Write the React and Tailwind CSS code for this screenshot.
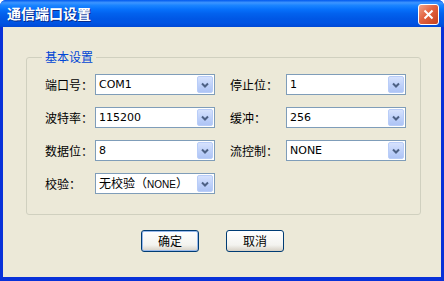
import React from "react";

const cn = "font-['Noto_Sans_CJK_SC',sans-serif]";

// XP风格下拉框
const Combo = ({ value }) => (
  <div className="w-[120px] h-[21px] border border-[#7f9db9] bg-white flex items-center">
    <div className="flex-1 min-w-0 pl-[3px] text-[11px] text-black leading-[16px] font-['DejaVu_Sans','Noto_Sans_CJK_SC',sans-serif] whitespace-nowrap">
      {value}
    </div>
    <div className="shrink-0 w-[16px] h-[17px] mr-[1px] rounded-[2px] border border-[#b9cdf8] bg-[linear-gradient(to_bottom,#d6e2fd,#bccff9_60%,#aec4f5)] flex items-center justify-center">
      <svg width="8" height="6" viewBox="0 0 8 6">
        <path d="M1 1.5 L4 4.5 L7 1.5" stroke="#4d6185" strokeWidth="2" fill="none" />
      </svg>
    </div>
  </div>
);

const Field = ({ label, value, labelW }) => (
  <div className="flex items-center">
    <span className={`${labelW} text-[12px] text-black ${cn}`}>{label}</span>
    <Combo value={value} />
  </div>
);

const Button = ({ children, primary }) => (
  <button
    className={`w-[58px] h-[22px] rounded-[3px] border text-[12px] text-black ${cn} bg-[linear-gradient(to_bottom,#ffffff,#f3f3ef_70%,#d6d0c5)] ${
      primary ? "border-[#003c74] shadow-[inset_0_0_0_1px_#98b8ea]" : "border-[#003c74]"
    }`}
  >
    {children}
  </button>
);

export default function App() {
  return (
    <div className="w-[444px] h-[281px] flex flex-col rounded-t-[6px] overflow-hidden bg-[#0831d9]">
      {/* 标题栏 */}
      <div className="h-[27px] shrink-0 flex items-center justify-between pl-[7px] pr-[5px] bg-[linear-gradient(to_bottom,#0058ee_0%,#3d95ff_10%,#1a84ff_20%,#0670fb_35%,#0262ee_50%,#0057e5_70%,#0054e3_85%,#0049d6_100%)]">
        <span className={`text-[14px] font-bold text-white ${cn} [text-shadow:1px_1px_0_#0a2c8a]`}>
          通信端口设置
        </span>
        <div className="w-[21px] h-[21px] mt-[2px] rounded-[3px] border border-white bg-[linear-gradient(135deg,#f0a58c,#e2623f_45%,#c5401c)] flex items-center justify-center">
          <svg width="11" height="11" viewBox="0 0 11 11">
            <path d="M1.5 1.5 L9.5 9.5 M9.5 1.5 L1.5 9.5" stroke="white" strokeWidth="2" />
          </svg>
        </div>
      </div>

      {/* 主体 */}
      <div className="flex-1 mx-[3px] mb-[4px] bg-[#ece9d8] flex flex-col">
        <fieldset className="mt-[21px] ml-[23px] mr-[20px] h-[167px] border border-[#d0d0bf] rounded-[3px] pl-[18px] pt-[8px]">
          <legend className={`ml-[-3px] px-[3px] text-[12px] text-[#0046d5] ${cn}`}>基本设置</legend>
          <div className="grid grid-cols-[185px_auto] gap-y-[12px]">
            <Field label="端口号：" value="COM1" labelW="w-[50px]" />
            <Field label="停止位：" value="1" labelW="w-[56px]" />
            <Field label="波特率：" value="115200" labelW="w-[50px]" />
            <Field label="缓冲：" value="256" labelW="w-[56px]" />
            <Field label="数据位：" value="8" labelW="w-[50px]" />
            <Field label="流控制：" value="NONE" labelW="w-[56px]" />
            <Field
              label="校验："
              labelW="w-[50px]"
              value={
                <span>
                  <span className={`text-[12px] ${cn}`}>无校验（</span>
                  <span className="text-[10px] font-['Liberation_Sans',sans-serif]">NONE</span>
                  <span className={`text-[12px] ${cn}`}>）</span>
                </span>
              }
            />
          </div>
        </fieldset>
        <div className="flex mt-[15px] ml-[138px] gap-[27px]">
          <Button primary>确定</Button>
          <Button>取消</Button>
        </div>
      </div>
    </div>
  );
}
